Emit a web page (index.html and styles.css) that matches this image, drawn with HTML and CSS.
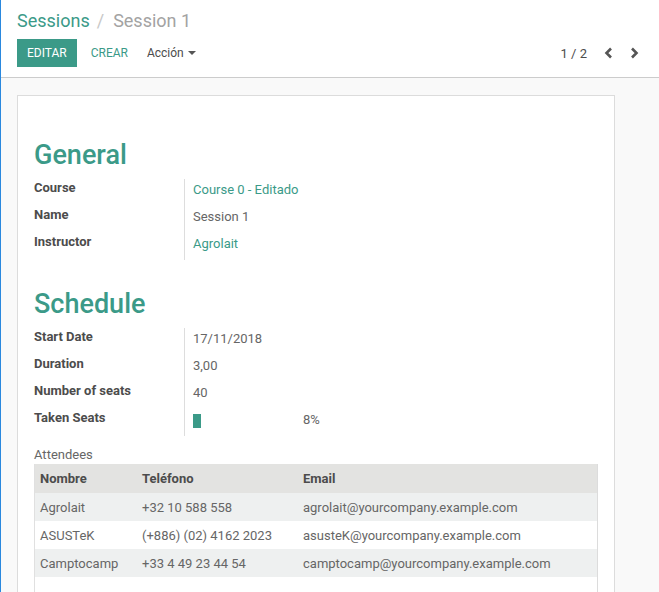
FILE: index.html
```html
<!DOCTYPE html>
<html lang="es">
<head>
<meta charset="utf-8">
<title>Session 1</title>
<link rel="stylesheet" href="styles.css">
</head>
<body>
<div class="app">
  <div class="cp">
    <ol class="crumbs">
      <li class="crumb-link">Sessions</li>
      <li class="crumb-sep">/</li>
      <li class="crumb-active">Session 1</li>
    </ol>
    <div class="cp-row">
      <div class="btns">
        <button class="btn btn-primary">Editar</button>
        <button class="btn btn-link">Crear</button>
        <button class="btn btn-dd">Acción <span class="caret"></span></button>
      </div>
      <div class="pager">
        <span class="pager-value">1 / 2</span>
        <button class="pager-btn" aria-label="Anterior">
          <svg width="9" height="12" viewBox="0 0 9 12"><polyline points="7,1.5 2.5,6 7,10.5" fill="none" stroke="#555" stroke-width="2.6"/></svg>
        </button>
        <button class="pager-btn" aria-label="Siguiente">
          <svg width="9" height="12" viewBox="0 0 9 12"><polyline points="2,1.5 6.5,6 2,10.5" fill="none" stroke="#555" stroke-width="2.6"/></svg>
        </button>
      </div>
    </div>
  </div>
  <div class="sheet-bg">
    <div class="sheet">
      <h1 class="title first">General</h1>
      <div class="group">
        <div class="lbl">Course</div><div class="val link">Course 0 - Editado</div>
        <div class="lbl">Name</div><div class="val">Session 1</div>
        <div class="lbl">Instructor</div><div class="val link">Agrolait</div>
      </div>
      <h1 class="title second">Schedule</h1>
      <div class="group">
        <div class="lbl">Start Date</div><div class="val">17/11/2018</div>
        <div class="lbl">Duration</div><div class="val">3,00</div>
        <div class="lbl">Number of seats</div><div class="val">40</div>
        <div class="lbl">Taken Seats</div>
        <div class="val progress-row">
          <div class="progress"><div class="progress-bar" style="width:8%"></div></div>
          <span class="progress-text">8%</span>
        </div>
      </div>
      <div class="att-label">Attendees</div>
      <div class="table-wrap">
        <table class="list">
          <thead>
            <tr><th class="c1">Nombre</th><th class="c2">Teléfono</th><th>Email</th></tr>
          </thead>
          <tbody>
            <tr class="odd"><td>Agrolait</td><td>+32 10 588 558</td><td>agrolait@yourcompany.example.com</td></tr>
            <tr><td>ASUSTeK</td><td>(+886) (02) 4162 2023</td><td>asusteK@yourcompany.example.com</td></tr>
            <tr class="odd"><td>Camptocamp</td><td>+33 4 49 23 44 54</td><td>camptocamp@yourcompany.example.com</td></tr>
          </tbody>
        </table>
      </div>
    </div>
  </div>
</div>
</body>
</html>
```
FILE: styles.css
```css
* { box-sizing: border-box; }
html, body { margin: 0; padding: 0; }
body {
  font-family: Roboto, "Noto Sans", "Liberation Sans", sans-serif;
  font-size: 13px;
  color: #666;
  background: #f9f9f9;
  overflow: hidden;
}
.app {
  border-left: 1px solid #2a88de;
  min-height: 592px;
}
.cp {
  background: #fff;
  height: 78px;
  padding: 7px 12px 0 16px;
  border-bottom: 1px solid #cccccc;
}
.crumbs {
  display: flex;
  margin: 0;
  padding: 0;
  list-style: none;
  font-size: 18px;
  line-height: 27px;
}
.crumb-link { color: #3b9a88; }
.crumb-sep { color: #c8c8c8; margin: 0 9px 0 7px; }
.crumb-active { color: #a3a3a3; }
.cp-row {
  display: flex;
  justify-content: space-between;
  align-items: center;
  margin-top: 5px;
  height: 28px;
}
.btns { display: flex; height: 28px; }
.btn {
  font-family: inherit;
  border: none;
  background: none;
  height: 28px;
  padding: 0 10px;
  font-size: 12px;
  line-height: 28px;
  cursor: pointer;
}
.btn-primary {
  background: #3b9a88;
  color: #fff;
  text-transform: uppercase;
}
.btn-link {
  color: #3b9a88;
  text-transform: uppercase;
  padding: 0 14px;
}
.btn-dd {
  color: #4c4c4c;
  padding: 0 5px;
  display: flex;
  align-items: center;
}
.caret {
  display: inline-block;
  margin-left: 4px;
  width: 0;
  height: 0;
  border-left: 4px solid transparent;
  border-right: 4px solid transparent;
  border-top: 4px solid #555;
}
.pager { display: flex; align-items: center; }
.pager-value { color: #4c4c4c; font-size: 13px; margin-right: 8px; }
.pager-btn {
  width: 26px;
  height: 28px;
  border: none;
  background: none;
  padding: 0;
  display: flex;
  align-items: center;
  justify-content: center;
}
.sheet-bg {
  padding: 17px 44px 0 16px;
}
.sheet {
  background: #fff;
  border: 1px solid #dcdcdc;
  padding: 16px;
  min-height: 560px;
}
.title {
  font-size: 27px;
  line-height: 36px;
  font-weight: 500;
  color: #3b9a88;
  margin: 0;
}
.title.first { margin: 25px 0 6px; }
.title.second { margin: 26px 0 6px; }
.group {
  display: grid;
  grid-template-columns: 151px 1fr;
  grid-auto-rows: 27px;
}
.lbl {
  font-weight: 700;
  color: #4c4c4c;
  line-height: 18px;
  border-right: 1px solid #dddddd;
}
.val {
  line-height: 18px;
  padding: 2px 0 0 8px;
  color: #666;
}
.val.link { color: #3b9a88; }
.progress-row { display: flex; align-items: flex-start; }
.progress {
  width: 100px;
  height: 14px;
  margin-top: 3px;
}
.progress-bar { height: 14px; background: #3b9a88; }
.progress-text { margin-left: 10px; }
.att-label {
  margin-top: 10px;
  line-height: 18px;
  color: #666;
}
.table-wrap {
  border-left: 1px solid #e0e0e0;
  border-right: 1px solid #dcdcdc;
  min-height: 200px;
}
.list {
  width: 100%;
  border-collapse: collapse;
}
.list th {
  background: #e3e3e1;
  height: 29px;
  text-align: left;
  font-weight: 700;
  color: #4c4c4c;
  padding: 0 5px;
}
.list th.c1 { width: 102px; }
.list th.c2 { width: 161px; }
.list td {
  height: 28px;
  padding: 0 5px;
  color: #666;
}
.list tr.odd td { background: #eef0f0; }
```
